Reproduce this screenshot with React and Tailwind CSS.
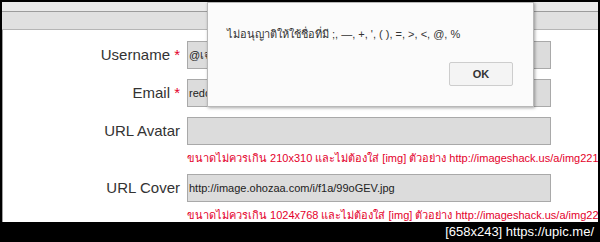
import React from 'react'

const rows = [
  { label: 'Username', required: true, value: '@เจ' },
  { label: 'Email', required: true, value: 'redcat@' },
]

function Field({ label, required, value, hint }) {
  return (
    <div className="flex flex-col">
      <div className="flex items-center">
        <label className="w-[177px] text-right text-[15px] text-[#333]">
          {label}
          {required && <span className="text-[#e4002b]"> *</span>}
        </label>
        <div className="ml-[7px] w-[364px] h-[28px] bg-[#dcdcdc] border border-[#a9a9a9] flex items-center px-[1px] text-[11px] text-[#222] overflow-hidden whitespace-nowrap">
          {value}
        </div>
      </div>
      {hint && (
        <div className="ml-[184px] mt-[6px] h-[13px] text-[11px] leading-[14px] text-[#e4002b] whitespace-nowrap">
          {hint}
        </div>
      )}
    </div>
  )
}

export default function App() {
  return (
    <div className="relative w-[600px] h-[242px] bg-black overflow-hidden font-['Liberation_Sans',Arial,sans-serif]">
      <div className="pt-[2px] px-[2px] h-[222px]">
        <div className="h-full flex flex-col bg-white">
          <div className="h-[10px] bg-[#e9e9e9] border-b border-[#9c9c9c]" />
          <div className="h-[18px] bg-[#e0e0e0] border-b border-[#b5b5b5]" />
          <div className="flex-1 border-l border-[#a0a0a0] overflow-hidden pt-[11px] flex flex-col gap-[10px]">
            {rows.map((r) => (
              <Field key={r.label} {...r} />
            ))}
            <Field
              label="URL Avatar"
              value=""
              hint="ขนาดไม่ควรเกิน 210x310 และไม่ต้องใส่ [img] ตัวอย่าง http://imageshack.us/a/img221/"
            />
            <Field
              label="URL Cover"
              value="http://image.ohozaa.com/i/f1a/99oGEV.jpg"
              hint="ขนาดไม่ควรเกิน 1024x768 และไม่ต้องใส่ [img] ตัวอย่าง http://imageshack.us/a/img221/"
            />
          </div>
        </div>
      </div>
      <div className="h-[20px] flex items-center justify-end pr-[6px] text-white text-[13px]">
        [658x243] https://upic.me/
      </div>

      {/* alert dialog */}
      <div className="absolute left-[207px] top-[2px] w-[327px] h-[105px] bg-[#fbfbfb] border border-[#b8b8b8] shadow-[1px_1px_3px_rgba(0,0,0,0.35)] flex flex-col">
        <p className="mt-[23px] ml-[19px] text-[11px] text-[#333]">
          ไม่อนุญาติให้ใช้ชื่อที่มี ;, —, +, ', ( ), =, &gt;, &lt;, @, %
        </p>
        <div className="mt-auto mb-[20px] mr-[20px] flex justify-end">
          <button className="w-[64px] h-[24px] bg-[#f4f4f4] border border-[#cdcdcd] rounded-[2px] text-[11px] font-bold text-[#333]">
            OK
          </button>
        </div>
      </div>
    </div>
  )
}
